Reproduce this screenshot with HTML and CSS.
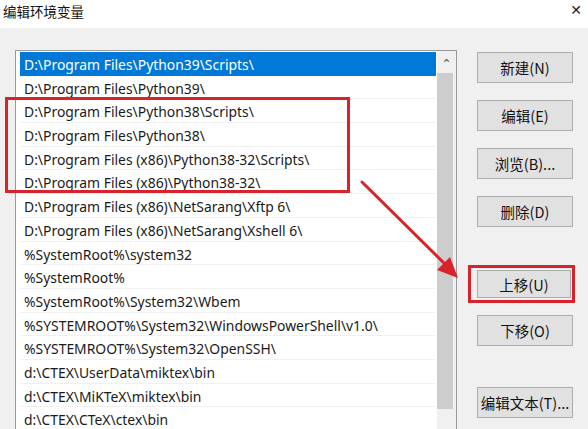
FILE: index.html
```html
<!DOCTYPE html>
<html lang="zh-CN">
<head>
    <meta charset="UTF-8">
    <title>编辑环境变量</title>
    <link rel="stylesheet" href="styles.css">
</head>
<body>
    <div class="dialog">
        <div class="title-bar">
            <span class="title">编辑环境变量</span>
            <span class="close">&#x2715;</span>
        </div>

        <div class="content">
            <div class="list-box">
                <ul class="path-list">
                    <li class="selected">D:\Program Files\Python39\Scripts\</li>
                    <li>D:\Program Files\Python39\</li>
                    <li>D:\Program Files\Python38\Scripts\</li>
                    <li>D:\Program Files\Python38\</li>
                    <li>D:\Program Files (x86)\Python38-32\Scripts\</li>
                    <li>D:\Program Files (x86)\Python38-32\</li>
                    <li>D:\Program Files (x86)\NetSarang\Xftp 6\</li>
                    <li>D:\Program Files (x86)\NetSarang\Xshell 6\</li>
                    <li>%SystemRoot%\system32</li>
                    <li>%SystemRoot%</li>
                    <li>%SystemRoot%\System32\Wbem</li>
                    <li>%SYSTEMROOT%\System32\WindowsPowerShell\v1.0\</li>
                    <li>%SYSTEMROOT%\System32\OpenSSH\</li>
                    <li>d:\CTEX\UserData\miktex\bin</li>
                    <li>d:\CTEX\MiKTeX\miktex\bin</li>
                    <li>d:\CTEX\CTeX\ctex\bin</li>
                </ul>
                <div class="scrollbar">
                    <div class="scroll-up">&#x2303;</div>
                    <div class="scroll-thumb"></div>
                </div>
            </div>

            <div class="buttons">
                <button class="btn">新建(N)</button>
                <button class="btn">编辑(E)</button>
                <button class="btn">浏览(B)...</button>
                <button class="btn">删除(D)</button>
                <div class="mark-box">
                    <button class="btn">上移(U)</button>
                </div>
                <button class="btn">下移(O)</button>
                <button class="btn btn-last">编辑文本(T)...</button>
            </div>
        </div>

        <div class="mark-rows"></div>

        <svg class="mark-arrow" width="588" height="429" viewBox="0 0 588 429">
            <line x1="362" y1="182" x2="448" y2="267" stroke="#d8232a" stroke-width="3" stroke-linecap="round"/>
            <polygon points="458,278 437,270 450,257" fill="#d8232a"/>
        </svg>
    </div>
</body>
</html>
```

FILE: styles.css
```css
body {
    margin: 0;
    padding: 0;
    overflow: hidden;
    background-color: #f0f0f0;
    font-family: "Noto Sans", "Noto Sans CJK SC", sans-serif;
    color: #000;
}

.dialog {
    position: relative;
    width: 588px;
    height: 429px;
    overflow: hidden;
}

.title-bar {
    height: 28px;
    background-color: #fff;
    display: flex;
    justify-content: space-between;
    align-items: flex-start;
}

.title {
    font-family: "Noto Sans CJK SC", sans-serif;
    font-size: 13.5px;
    line-height: 22px;
    padding-left: 3px;
    color: #111;
}

.close {
    font-family: "DejaVu Sans", sans-serif;
    font-size: 14px;
    line-height: 20px;
    padding-right: 6px;
    color: #222;
}

.content {
    display: flex;
    padding: 22px 0 0 15px;
}

.list-box {
    width: 440px;
    height: 400px;
    border: 1px solid #9a9a9a;
    border-bottom: none;
    background-color: #fff;
    display: flex;
}

.path-list {
    list-style: none;
    margin: 1px 0 0 4px;
    padding: 0;
    width: 416px;
}

.path-list li {
    height: 23.7px;
    line-height: 21px;
    padding: 2px 0 0 4px;
    font-size: 13.9px;
    color: #1a1a1a;
    border-bottom: 1px solid #f0f0f0;
    box-sizing: border-box;
    white-space: nowrap;
}

.path-list li.selected {
    background-color: #0078d7;
    color: #fff;
    border-bottom-color: #0078d7;
}

.scrollbar {
    margin-left: auto;
    width: 19px;
    background-color: #f0f0f0;
    display: flex;
    flex-direction: column;
}

.scroll-up {
    height: 22px;
    font-family: "DejaVu Sans", sans-serif;
    font-size: 12px;
    line-height: 26px;
    text-align: center;
    color: #555;
}

.scroll-thumb {
    width: 16px;
    height: 336px;
    background-color: #cdcdcd;
}

.buttons {
    display: flex;
    flex-direction: column;
    align-items: flex-start;
    padding: 2px 0 0 20px;
    gap: 17px;
}

.btn {
    width: 96px;
    height: 31px;
    padding: 0;
    background-color: #e1e1e1;
    border: 1px solid #adadad;
    font-family: "Noto Sans CJK SC", sans-serif;
    font-size: 14.5px;
    color: #111;
}

.mark-box {
    box-sizing: border-box;
    margin: 21px 0 0 -9px;
    padding: 2px 2px 2px 6px;
    border: 3px solid #d8232a;
    width: 107px;
    height: 38px;
}

.mark-box .btn {
    width: 94px;
    height: 28px;
}

.buttons .mark-box + .btn {
    margin-top: -5px;
}

.btn-last {
    margin-top: 24px;
}

.mark-rows {
    position: absolute;
    left: 5px;
    top: 97px;
    width: 339px;
    height: 90px;
    border: 3px solid #d8232a;
}

.mark-arrow {
    position: absolute;
    left: 0;
    top: 0;
    pointer-events: none;
}
```
